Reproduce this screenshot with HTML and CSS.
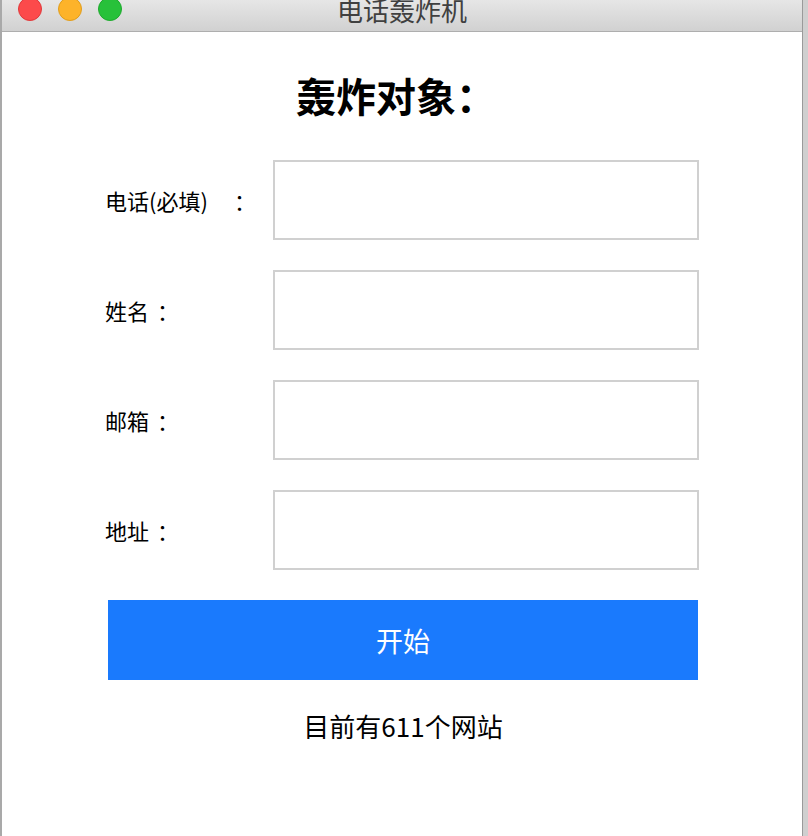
FILE: index.html
```html
<!DOCTYPE html>
<html lang="zh-CN">
<head>
<meta charset="utf-8">
<title>电话轰炸机</title>
<link rel="stylesheet" href="styles.css">
</head>
<body>
<div class="screen">
  <div class="window">
    <div class="titlebar">
      <div class="lights">
        <span class="light red"></span>
        <span class="light yellow"></span>
        <span class="light green"></span>
      </div>
      <div class="title">电话轰炸机</div>
    </div>
    <div class="content">
      <h1 class="heading">轰炸对象：</h1>
      <form class="form">
        <div class="row">
          <label class="label">电话(必填)<span class="colon wide">：</span></label>
          <input class="field" type="text">
        </div>
        <div class="row">
          <label class="label">姓名<span class="colon">：</span></label>
          <input class="field" type="text">
        </div>
        <div class="row">
          <label class="label">邮箱<span class="colon">：</span></label>
          <input class="field" type="text">
        </div>
        <div class="row">
          <label class="label">地址<span class="colon">：</span></label>
          <input class="field" type="text">
        </div>
        <button class="start" type="button">开始</button>
      </form>
      <p class="footer">目前有611个网站</p>
    </div>
  </div>
  <div class="desk"></div>
</div>
</body>
</html>
```
FILE: styles.css
```css
* { box-sizing: border-box; }
html, body {
  margin: 0;
  padding: 0;
  width: 808px;
  height: 836px;
  overflow: hidden;
  font-family: "Noto Sans CJK SC", "Noto Sans", sans-serif;
}
.screen {
  display: flex;
  width: 808px;
  height: 836px;
}
.window {
  width: 803px;
  height: 836px;
  background: #fff;
  border-left: 2px solid #a9a9a9;
  border-right: 1px solid #9a9a9a;
  display: flex;
  flex-direction: column;
}
.desk {
  flex: 1;
  background: #cfcfcf;
}
.titlebar {
  position: relative;
  height: 32px;
  background: linear-gradient(#e6e6e6, #d1d1d1);
  border-bottom: 1px solid #aeaeae;
  display: flex;
  justify-content: center;
}
.lights {
  position: absolute;
  left: 16px;
  top: -3px;
  display: flex;
  gap: 16px;
}
.light {
  width: 24px;
  height: 24px;
  border-radius: 50%;
}
.red { background: #fc4a4b; border: 1px solid #e0393b; }
.yellow { background: #fdb32a; border: 1px solid #e09d1c; }
.green { background: #27c13a; border: 1px solid #1eaa2d; }
.title {
  font-size: 26px;
  line-height: 26px;
  margin-top: -3px;
  color: #404040;
}
.content {
  flex: 1;
  display: flex;
  flex-direction: column;
  align-items: center;
}
.heading {
  margin: 40px 0 0;
  font-size: 40px;
  line-height: 46px;
  font-weight: 700;
  color: #000;
  padding-right: 12px;
}
.form {
  margin-top: 42px;
  display: flex;
  flex-direction: column;
  gap: 30px;
  width: 592px;
  margin-left: 4px;
}
.row {
  display: flex;
  align-items: center;
}
.label {
  width: 168px;
  font-size: 22px;
  color: #000;
  margin-left: -3px;
  white-space: nowrap;
}
.colon {
  margin-left: 8px;
}
.colon.wide {
  margin-left: 26px;
}
.field {
  width: 426px;
  height: 80px;
  border: 2px solid #d0d0d0;
  outline: none;
  background: #fff;
  flex-shrink: 0;
}
.start {
  width: 590px;
  height: 80px;
  border: 0;
  background: #1a7afd;
  color: #fff;
  font-family: inherit;
  font-size: 27px;
  padding: 0;
}
.footer {
  margin: 26px 0 0 2px;
  font-size: 26px;
  line-height: 40px;
  color: #000;
}
```
